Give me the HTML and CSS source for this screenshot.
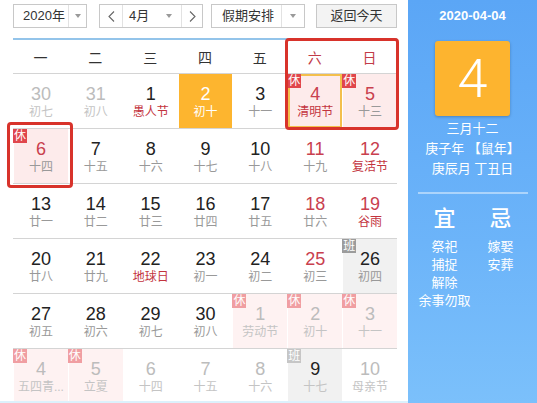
FILE: index.html
```html
<!DOCTYPE html>
<html lang="zh-CN">
<head>
<meta charset="utf-8">
<title>万年历</title>
<link rel="stylesheet" href="styles.css">
</head>
<body>
<div class="app">
  <div class="main">
    <div class="toolbar">
      <div class="sel year">
        <span class="val">2020年</span>
        <span class="drop"><i class="tri"></i></span>
      </div>
      <div class="sel month">
        <span class="nav"><svg width="7" height="11" viewBox="0 0 7 11"><polyline points="6,0.5 1,5.5 6,10.5" fill="none" stroke="#666" stroke-width="1.1"/></svg></span>
        <span class="val">4月<i class="tri"></i></span>
        <span class="nav"><svg width="7" height="11" viewBox="0 0 7 11"><polyline points="1,0.5 6,5.5 1,10.5" fill="none" stroke="#666" stroke-width="1.1"/></svg></span>
      </div>
      <div class="sel holiday">
        <span class="val">假期安排</span>
        <span class="drop"><i class="tri"></i></span>
      </div>
      <div class="btn">返回今天</div>
    </div>
    <div class="calendar">
      <div class="weekdays">
        <span>一</span><span>二</span><span>三</span><span>四</span><span>五</span><span class="red">六</span><span class="red">日</span>
      </div>
      <div class="row">
        <div class="cell other"><span class="num">30</span><span class="lunar">初七</span></div>
        <div class="cell other"><span class="num">31</span><span class="lunar">初八</span></div>
        <div class="cell"><span class="num">1</span><span class="lunar fest">愚人节</span></div>
        <div class="cell today"><span class="num">2</span><span class="lunar">初十</span></div>
        <div class="cell"><span class="num">3</span><span class="lunar">十一</span></div>
        <div class="cell rest selected wk"><span class="badge">休</span><span class="num">4</span><span class="lunar fest">清明节</span></div>
        <div class="cell rest wk"><span class="badge">休</span><span class="num">5</span><span class="lunar">十三</span></div>
      </div>
      <div class="row">
        <div class="cell rest wk"><span class="badge">休</span><span class="num">6</span><span class="lunar">十四</span></div>
        <div class="cell"><span class="num">7</span><span class="lunar">十五</span></div>
        <div class="cell"><span class="num">8</span><span class="lunar">十六</span></div>
        <div class="cell"><span class="num">9</span><span class="lunar">十七</span></div>
        <div class="cell"><span class="num">10</span><span class="lunar">十八</span></div>
        <div class="cell wk"><span class="num">11</span><span class="lunar">十九</span></div>
        <div class="cell wk"><span class="num">12</span><span class="lunar fest">复活节</span></div>
      </div>
      <div class="row">
        <div class="cell"><span class="num">13</span><span class="lunar">廿一</span></div>
        <div class="cell"><span class="num">14</span><span class="lunar">廿二</span></div>
        <div class="cell"><span class="num">15</span><span class="lunar">廿三</span></div>
        <div class="cell"><span class="num">16</span><span class="lunar">廿四</span></div>
        <div class="cell"><span class="num">17</span><span class="lunar">廿五</span></div>
        <div class="cell wk"><span class="num">18</span><span class="lunar">廿六</span></div>
        <div class="cell wk"><span class="num">19</span><span class="lunar fest">谷雨</span></div>
      </div>
      <div class="row">
        <div class="cell"><span class="num">20</span><span class="lunar">廿八</span></div>
        <div class="cell"><span class="num">21</span><span class="lunar">廿九</span></div>
        <div class="cell"><span class="num">22</span><span class="lunar fest">地球日</span></div>
        <div class="cell"><span class="num">23</span><span class="lunar">初一</span></div>
        <div class="cell"><span class="num">24</span><span class="lunar">初二</span></div>
        <div class="cell wk"><span class="num">25</span><span class="lunar">初三</span></div>
        <div class="cell work"><span class="badge gray">班</span><span class="num">26</span><span class="lunar">初四</span></div>
      </div>
      <div class="row">
        <div class="cell"><span class="num">27</span><span class="lunar">初五</span></div>
        <div class="cell"><span class="num">28</span><span class="lunar">初六</span></div>
        <div class="cell"><span class="num">29</span><span class="lunar">初七</span></div>
        <div class="cell"><span class="num">30</span><span class="lunar">初八</span></div>
        <div class="cell other rest"><span class="badge">休</span><span class="num">1</span><span class="lunar">劳动节</span></div>
        <div class="cell other rest"><span class="badge">休</span><span class="num">2</span><span class="lunar">初十</span></div>
        <div class="cell other rest"><span class="badge">休</span><span class="num">3</span><span class="lunar">十一</span></div>
      </div>
      <div class="row last">
        <div class="cell other rest"><span class="badge">休</span><span class="num">4</span><span class="lunar">五四青...</span></div>
        <div class="cell other rest"><span class="badge">休</span><span class="num">5</span><span class="lunar">立夏</span></div>
        <div class="cell other"><span class="num">6</span><span class="lunar">十四</span></div>
        <div class="cell other"><span class="num">7</span><span class="lunar">十五</span></div>
        <div class="cell other"><span class="num">8</span><span class="lunar">十六</span></div>
        <div class="cell other work dark"><span class="badge gray">班</span><span class="num">9</span><span class="lunar">十七</span></div>
        <div class="cell other"><span class="num">10</span><span class="lunar">母亲节</span></div>
      </div>
    </div>
    <div class="frame frame-weekend"></div>
    <div class="frame frame-six"></div>
  </div>
  <aside class="side">
    <div class="date">2020-04-04</div>
    <div class="bigday">4</div>
    <div class="lunar-info">
      <div>三月十二</div>
      <div>庚子年 【鼠年】</div>
      <div>庚辰月 丁丑日</div>
    </div>
    <div class="divider"></div>
    <div class="yiji">
      <div class="col">
        <div class="head">宜</div>
        <div class="item">祭祀</div>
        <div class="item">捕捉</div>
        <div class="item">解除</div>
        <div class="item">余事勿取</div>
      </div>
      <div class="col">
        <div class="head">忌</div>
        <div class="item">嫁娶</div>
        <div class="item">安葬</div>
      </div>
    </div>
  </aside>
</div>
</body>
</html>
```

FILE: styles.css
```css
html, body {
  margin: 0;
  padding: 0;
  background: #fff;
}

body {
  font-family: "Liberation Sans", "Noto Sans CJK SC", sans-serif;
  color: #333;
}

.app {
  display: flex;
  width: 537px;
  height: 403px;
  overflow: hidden;
}

.main {
  position: relative;
  width: 408px;
  height: 403px;
  box-sizing: border-box;
  border-bottom: 2px solid #dcf1fc;
  overflow: hidden;
  flex: none;
}

/* toolbar */
.toolbar {
  display: flex;
  align-items: flex-start;
  height: 38px;
  box-sizing: border-box;
  padding: 4px 0 0 13px;
}

.sel {
  display: flex;
  height: 24px;
  box-sizing: border-box;
  border: 1px solid #c8c8c8;
  background: #fff;
  font-size: 13px;
  line-height: 22px;
  color: #333;
}

.sel .val {
  display: flex;
  align-items: center;
  box-sizing: border-box;
}

.drop {
  flex: 1;
  display: flex;
  align-items: center;
  justify-content: center;
}

.tri {
  display: block;
  width: 0;
  height: 0;
  border-left: 3px solid transparent;
  border-right: 3px solid transparent;
  border-top: 4px solid #9a9a9a;
}

.year {
  width: 74px;
}

.year .val {
  width: 55px;
  padding-left: 9px;
  border-right: 1px solid #e2e2e2;
}

.month {
  width: 104px;
  margin-left: 12px;
}

.month .nav {
  display: flex;
  align-items: center;
  justify-content: center;
}

.month .nav:first-child {
  width: 22px;
  border-right: 1px solid #e2e2e2;
}

.month .nav:last-child {
  flex: 1;
}

.month .val {
  width: 59px;
  padding: 0 9px 0 6px;
  justify-content: space-between;
  border-right: 1px solid #e2e2e2;
}

.holiday {
  width: 94px;
  margin-left: 8px;
}

.holiday .val {
  width: 70px;
  padding-left: 10px;
  border-right: 1px solid #e2e2e2;
}

.btn {
  width: 81px;
  height: 24px;
  box-sizing: border-box;
  margin-left: 11px;
  border: 1px solid #c8c8c8;
  background: #f3f3f3;
  font-size: 13px;
  line-height: 22px;
  text-align: center;
  color: #333;
}

/* calendar grid */
.calendar {
  width: 384px;
  margin-left: 13px;
  border-top: 2px solid #93c4ea;
}

.weekdays {
  display: grid;
  grid-template-columns: repeat(7, 1fr);
  height: 34px;
  box-sizing: border-box;
  border-bottom: 1px solid #d4d4d4;
  align-items: center;
  text-align: center;
  font-size: 14px;
  color: #333;
}

.weekdays .red {
  color: #c23b48;
}

.row {
  display: grid;
  grid-template-columns: repeat(7, 1fr);
  height: 55px;
  box-sizing: border-box;
  border-bottom: 1px solid #d4d4d4;
}

.row.last {
  border-bottom: none;
}

.cell {
  position: relative;
  display: flex;
  flex-direction: column;
  align-items: center;
  box-sizing: border-box;
  border-left: 1px solid #fff;
  padding-top: 9px;
  min-width: 0;
}

.num {
  font-size: 18px;
  line-height: 22px;
  color: #222;
}

.lunar {
  font-size: 12px;
  line-height: 14px;
  color: #999;
  white-space: nowrap;
}

.lunar.fest {
  color: #c3343e;
}

.wk .num {
  color: #c9404e;
}

.rest {
  background: #fdebeb;
}

.work {
  background: #f1f1f1;
}

.today {
  background: #fdb52f;
}

.today .num,
.today .lunar {
  color: #fff;
}

.selected {
  box-shadow: inset 0 0 0 2px #f3bf4c;
}

.other .num {
  color: #bcbcbc;
}

.other .lunar {
  color: #c4c4c4;
}

.other.rest {
  background: #fef2f2;
}

.other.dark .num {
  color: #222;
}

.badge {
  position: absolute;
  left: -1px;
  top: 0;
  width: 14px;
  height: 14px;
  background: #e0464c;
  color: #fff;
  font-size: 12px;
  line-height: 14px;
  text-align: center;
}

.badge.gray {
  background: #9c9c9c;
}

.other .badge {
  background: #f09ea2;
}

.other .badge.gray {
  background: #c6c6c6;
}

/* annotation frames */
.frame {
  position: absolute;
  box-sizing: border-box;
  border: 3px solid #d8332b;
  border-radius: 4px;
  pointer-events: none;
}

.frame-weekend {
  left: 285px;
  top: 38px;
  width: 114px;
  height: 92px;
}

.frame-six {
  left: 7px;
  top: 122px;
  width: 66px;
  height: 66px;
}

/* side panel */
.side {
  flex: 1;
  display: flex;
  flex-direction: column;
  align-items: center;
  background: linear-gradient(180deg, #5ba6f6 0%, #6cb4f9 60%, #7bc0fb 100%);
  color: #fff;
  padding-top: 8px;
  box-sizing: border-box;
}

.date {
  font-size: 13px;
  font-weight: bold;
  line-height: 16px;
}

.bigday {
  width: 75px;
  height: 75px;
  margin-top: 17px;
  background: #fdb42f;
  border-radius: 3px;
  box-shadow: 0 1px 3px rgba(0, 0, 0, 0.25);
  font-family: "Roboto", "Liberation Sans", sans-serif;
  font-weight: 300;
  font-size: 54px;
  line-height: 75px;
  text-align: center;
  color: #fff;
}

.lunar-info {
  margin-top: 3px;
  font-size: 13px;
  line-height: 20px;
  text-align: center;
}

.divider {
  width: 110px;
  height: 2px;
  margin-top: 13px;
  background: rgba(255, 255, 255, 0.45);
}

.yiji {
  display: flex;
  margin-top: 12px;
}

.col {
  width: 56px;
  display: flex;
  flex-direction: column;
  align-items: center;
}

.head {
  font-size: 22px;
  line-height: 26px;
  font-weight: 500;
  margin-bottom: 6px;
}

.item {
  font-size: 13px;
  line-height: 18px;
  white-space: nowrap;
}
```
